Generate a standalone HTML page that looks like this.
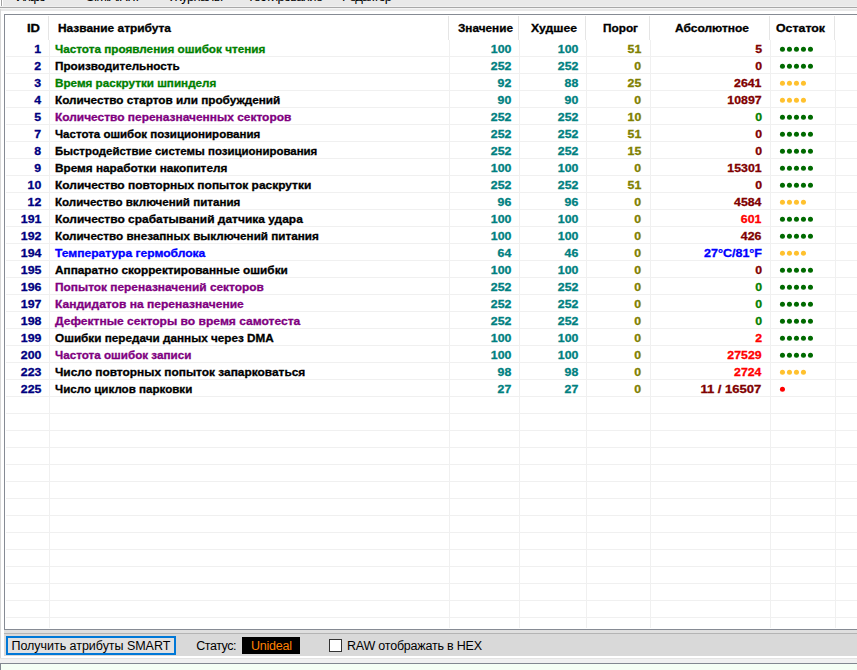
<!DOCTYPE html>
<html lang="ru"><head><meta charset="utf-8"><title>S.M.A.R.T.</title>
<style>
html,body{margin:0;padding:0}
body{width:857px;height:670px;overflow:hidden;position:relative;background:#fff;font-family:"Liberation Sans", sans-serif;}
.a{position:absolute}
.t{position:absolute;white-space:nowrap;font-weight:bold;font-size:11px;line-height:17px;height:17px;-webkit-text-stroke:0.3px}
.r{text-align:right}
.ui{position:absolute;white-space:nowrap;font-size:12.5px;line-height:17px;color:#000}
.hl{position:absolute;left:6px;right:0;height:1px;background:#f0f0f0}
.vl{position:absolute;top:40px;width:1px;height:588px;background:#f0f0f0}
.hs{position:absolute;top:16px;width:1px;height:24px;background:#e5e5e5}
</style></head><body>
<div class="a" style="left:0;top:0;width:857px;height:7px;background:#e9e9e9"></div>
<div class="a" style="left:0;top:0;width:3px;height:7px;background:#fff"></div>
<div class="a" style="left:1px;top:0;width:1px;height:6px;background:#a0a0a0"></div>
<div class="a" style="left:0;top:6px;width:857px;height:1px;background:#f0f0f0"></div>
<div class="a" style="left:0;top:7px;width:857px;height:1px;background:#a8a8a8"></div>
<div class="a" style="left:0;top:8px;width:857px;height:1px;background:#f4f4f4"></div>
<div class="a" style="left:0;top:9px;width:857px;height:2px;background:#e9e9e9"></div>
<div class="a" style="left:0;top:9px;width:1px;height:649px;background:#d8d8d8"></div>
<div class="ui" style="left:16px;top:-12px;font-size:13px;letter-spacing:-1.484px">Инфо</div>
<div class="ui" style="left:86px;top:-12px;font-size:13px;letter-spacing:-1.014px">S.M.A.R.T.</div>
<div class="ui" style="left:170px;top:-12px;font-size:13px;letter-spacing:-0.630px">Журналы</div>
<div class="ui" style="left:247px;top:-12px;font-size:13px;letter-spacing:-0.753px">Тестирование</div>
<div class="ui" style="left:342px;top:-12px;font-size:13px;letter-spacing:-0.853px">Редактор</div>
<div class="a" style="left:4px;top:14px;width:900px;height:614px;border:1px solid #868b94;background:#fff"></div>
<div class="hs" style="left:48px"></div>
<div class="hs" style="left:448px"></div>
<div class="hs" style="left:518px"></div>
<div class="hs" style="left:585px"></div>
<div class="hs" style="left:649px"></div>
<div class="hs" style="left:769px"></div>
<div class="hs" style="left:834px"></div>
<div class="vl" style="left:49px"></div>
<div class="vl" style="left:449px"></div>
<div class="vl" style="left:519px"></div>
<div class="vl" style="left:586px"></div>
<div class="vl" style="left:650px"></div>
<div class="vl" style="left:770px"></div>
<div class="vl" style="left:835px"></div>
<div class="hl" style="top:56px"></div>
<div class="hl" style="top:73px"></div>
<div class="hl" style="top:90px"></div>
<div class="hl" style="top:107px"></div>
<div class="hl" style="top:124px"></div>
<div class="hl" style="top:141px"></div>
<div class="hl" style="top:158px"></div>
<div class="hl" style="top:175px"></div>
<div class="hl" style="top:192px"></div>
<div class="hl" style="top:209px"></div>
<div class="hl" style="top:226px"></div>
<div class="hl" style="top:243px"></div>
<div class="hl" style="top:260px"></div>
<div class="hl" style="top:277px"></div>
<div class="hl" style="top:294px"></div>
<div class="hl" style="top:311px"></div>
<div class="hl" style="top:328px"></div>
<div class="hl" style="top:345px"></div>
<div class="hl" style="top:362px"></div>
<div class="hl" style="top:379px"></div>
<div class="hl" style="top:396px"></div>
<div class="hl" style="top:413px"></div>
<div class="hl" style="top:430px"></div>
<div class="hl" style="top:447px"></div>
<div class="hl" style="top:464px"></div>
<div class="hl" style="top:481px"></div>
<div class="hl" style="top:498px"></div>
<div class="hl" style="top:515px"></div>
<div class="hl" style="top:532px"></div>
<div class="hl" style="top:549px"></div>
<div class="hl" style="top:566px"></div>
<div class="hl" style="top:583px"></div>
<div class="hl" style="top:600px"></div>
<div class="hl" style="top:617px"></div>
<div class="t" style="left:27px;top:20px;color:#000;transform:scaleX(1.1818);transform-origin:0 50%">ID</div>
<div class="t" style="left:58px;top:20px;color:#000;transform:scaleX(1.0826);transform-origin:0 50%">Название атрибута</div>
<div class="t" style="left:458px;top:20px;color:#000;transform:scaleX(1.0696);transform-origin:0 50%">Значение</div>
<div class="t" style="left:531px;top:20px;color:#000;transform:scaleX(1.1105);transform-origin:0 50%">Худшее</div>
<div class="t" style="left:603px;top:20px;color:#000;transform:scaleX(1.0718);transform-origin:0 50%">Порог</div>
<div class="t" style="left:675px;top:20px;color:#000;transform:scaleX(1.0882);transform-origin:0 50%">Абсолютное</div>
<div class="t" style="left:776px;top:20px;color:#000;transform:scaleX(1.1224);transform-origin:0 50%">Остаток</div>
<div class="t r" style="right:816.10px;top:41px;color:#000080;transform:scaleX(1.1184);transform-origin:100% 50%">1</div>
<div class="t" style="left:54.7px;top:41px;color:#008000;transform:scaleX(1.0650);transform-origin:0 50%">Частота проявления ошибок чтения</div>
<div class="t r" style="right:346.00px;top:41px;color:#008080;transform:scaleX(1.1193);transform-origin:100% 50%">100</div>
<div class="t r" style="right:279.00px;top:41px;color:#008080;transform:scaleX(1.1193);transform-origin:100% 50%">100</div>
<div class="t r" style="right:215.80px;top:41px;color:#808000;transform:scaleX(1.1184);transform-origin:100% 50%">51</div>
<div class="t r" style="right:95.20px;top:41px;color:#800000;transform:scaleX(1.1184);transform-origin:100% 50%">5</div>
<svg class="a" style="left:776px;top:40px" width="50" height="17" fill="#006a00"><circle cx="6.45" cy="9.30" r="2.5"/><circle cx="13.45" cy="9.30" r="2.5"/><circle cx="20.45" cy="9.30" r="2.5"/><circle cx="27.45" cy="9.30" r="2.5"/><circle cx="34.45" cy="9.30" r="2.5"/></svg>
<div class="t r" style="right:816.10px;top:58px;color:#000080;transform:scaleX(1.1184);transform-origin:100% 50%">2</div>
<div class="t" style="left:54.7px;top:58px;color:#000000;transform:scaleX(1.0643);transform-origin:0 50%">Производительность</div>
<div class="t r" style="right:346.00px;top:58px;color:#008080;transform:scaleX(1.1193);transform-origin:100% 50%">252</div>
<div class="t r" style="right:279.00px;top:58px;color:#008080;transform:scaleX(1.1193);transform-origin:100% 50%">252</div>
<div class="t r" style="right:215.80px;top:58px;color:#808000;transform:scaleX(1.1184);transform-origin:100% 50%">0</div>
<div class="t r" style="right:95.20px;top:58px;color:#800000;transform:scaleX(1.1184);transform-origin:100% 50%">0</div>
<svg class="a" style="left:776px;top:57px" width="50" height="17" fill="#006a00"><circle cx="6.45" cy="9.30" r="2.5"/><circle cx="13.45" cy="9.30" r="2.5"/><circle cx="20.45" cy="9.30" r="2.5"/><circle cx="27.45" cy="9.30" r="2.5"/><circle cx="34.45" cy="9.30" r="2.5"/></svg>
<div class="t r" style="right:816.10px;top:75px;color:#000080;transform:scaleX(1.1184);transform-origin:100% 50%">3</div>
<div class="t" style="left:54.7px;top:75px;color:#008000;transform:scaleX(1.0613);transform-origin:0 50%">Время раскрутки шпинделя</div>
<div class="t r" style="right:346.00px;top:75px;color:#008080;transform:scaleX(1.1184);transform-origin:100% 50%">92</div>
<div class="t r" style="right:279.00px;top:75px;color:#008080;transform:scaleX(1.1184);transform-origin:100% 50%">88</div>
<div class="t r" style="right:215.80px;top:75px;color:#808000;transform:scaleX(1.1184);transform-origin:100% 50%">25</div>
<div class="t r" style="right:95.20px;top:75px;color:#800000;transform:scaleX(1.1191);transform-origin:100% 50%">2641</div>
<svg class="a" style="left:776px;top:74px" width="50" height="17" fill="#ffc12e"><circle cx="6.45" cy="9.30" r="2.5"/><circle cx="13.45" cy="9.30" r="2.5"/><circle cx="20.45" cy="9.30" r="2.5"/><circle cx="27.45" cy="9.30" r="2.5"/></svg>
<div class="t r" style="right:816.10px;top:92px;color:#000080;transform:scaleX(1.1184);transform-origin:100% 50%">4</div>
<div class="t" style="left:54.7px;top:92px;color:#000000;transform:scaleX(1.0690);transform-origin:0 50%">Количество стартов или пробуждений</div>
<div class="t r" style="right:346.00px;top:92px;color:#008080;transform:scaleX(1.1184);transform-origin:100% 50%">90</div>
<div class="t r" style="right:279.00px;top:92px;color:#008080;transform:scaleX(1.1184);transform-origin:100% 50%">90</div>
<div class="t r" style="right:215.80px;top:92px;color:#808000;transform:scaleX(1.1184);transform-origin:100% 50%">0</div>
<div class="t r" style="right:95.20px;top:92px;color:#800000;transform:scaleX(1.1195);transform-origin:100% 50%">10897</div>
<svg class="a" style="left:776px;top:91px" width="50" height="17" fill="#ffc12e"><circle cx="6.45" cy="9.30" r="2.5"/><circle cx="13.45" cy="9.30" r="2.5"/><circle cx="20.45" cy="9.30" r="2.5"/><circle cx="27.45" cy="9.30" r="2.5"/></svg>
<div class="t r" style="right:816.10px;top:109px;color:#000080;transform:scaleX(1.1184);transform-origin:100% 50%">5</div>
<div class="t" style="left:54.7px;top:109px;color:#800080;transform:scaleX(1.0845);transform-origin:0 50%">Количество переназначенных секторов</div>
<div class="t r" style="right:346.00px;top:109px;color:#008080;transform:scaleX(1.1193);transform-origin:100% 50%">252</div>
<div class="t r" style="right:279.00px;top:109px;color:#008080;transform:scaleX(1.1193);transform-origin:100% 50%">252</div>
<div class="t r" style="right:215.80px;top:109px;color:#808000;transform:scaleX(1.1184);transform-origin:100% 50%">10</div>
<div class="t r" style="right:95.20px;top:109px;color:#008000;transform:scaleX(1.1184);transform-origin:100% 50%">0</div>
<svg class="a" style="left:776px;top:108px" width="50" height="17" fill="#006a00"><circle cx="6.45" cy="9.30" r="2.5"/><circle cx="13.45" cy="9.30" r="2.5"/><circle cx="20.45" cy="9.30" r="2.5"/><circle cx="27.45" cy="9.30" r="2.5"/><circle cx="34.45" cy="9.30" r="2.5"/></svg>
<div class="t r" style="right:816.10px;top:126px;color:#000080;transform:scaleX(1.1184);transform-origin:100% 50%">7</div>
<div class="t" style="left:54.7px;top:126px;color:#000000;transform:scaleX(1.0472);transform-origin:0 50%">Частота ошибок позиционирования</div>
<div class="t r" style="right:346.00px;top:126px;color:#008080;transform:scaleX(1.1193);transform-origin:100% 50%">252</div>
<div class="t r" style="right:279.00px;top:126px;color:#008080;transform:scaleX(1.1193);transform-origin:100% 50%">252</div>
<div class="t r" style="right:215.80px;top:126px;color:#808000;transform:scaleX(1.1184);transform-origin:100% 50%">51</div>
<div class="t r" style="right:95.20px;top:126px;color:#800000;transform:scaleX(1.1184);transform-origin:100% 50%">0</div>
<svg class="a" style="left:776px;top:125px" width="50" height="17" fill="#006a00"><circle cx="6.45" cy="9.30" r="2.5"/><circle cx="13.45" cy="9.30" r="2.5"/><circle cx="20.45" cy="9.30" r="2.5"/><circle cx="27.45" cy="9.30" r="2.5"/><circle cx="34.45" cy="9.30" r="2.5"/></svg>
<div class="t r" style="right:816.10px;top:143px;color:#000080;transform:scaleX(1.1184);transform-origin:100% 50%">8</div>
<div class="t" style="left:54.7px;top:143px;color:#000000;transform:scaleX(1.0400);transform-origin:0 50%">Быстродействие системы позиционирования</div>
<div class="t r" style="right:346.00px;top:143px;color:#008080;transform:scaleX(1.1193);transform-origin:100% 50%">252</div>
<div class="t r" style="right:279.00px;top:143px;color:#008080;transform:scaleX(1.1193);transform-origin:100% 50%">252</div>
<div class="t r" style="right:215.80px;top:143px;color:#808000;transform:scaleX(1.1184);transform-origin:100% 50%">15</div>
<div class="t r" style="right:95.20px;top:143px;color:#800000;transform:scaleX(1.1184);transform-origin:100% 50%">0</div>
<svg class="a" style="left:776px;top:142px" width="50" height="17" fill="#006a00"><circle cx="6.45" cy="9.30" r="2.5"/><circle cx="13.45" cy="9.30" r="2.5"/><circle cx="20.45" cy="9.30" r="2.5"/><circle cx="27.45" cy="9.30" r="2.5"/><circle cx="34.45" cy="9.30" r="2.5"/></svg>
<div class="t r" style="right:816.10px;top:160px;color:#000080;transform:scaleX(1.1184);transform-origin:100% 50%">9</div>
<div class="t" style="left:54.7px;top:160px;color:#000000;transform:scaleX(1.0704);transform-origin:0 50%">Время наработки накопителя</div>
<div class="t r" style="right:346.00px;top:160px;color:#008080;transform:scaleX(1.1193);transform-origin:100% 50%">100</div>
<div class="t r" style="right:279.00px;top:160px;color:#008080;transform:scaleX(1.1193);transform-origin:100% 50%">100</div>
<div class="t r" style="right:215.80px;top:160px;color:#808000;transform:scaleX(1.1184);transform-origin:100% 50%">0</div>
<div class="t r" style="right:95.20px;top:160px;color:#800000;transform:scaleX(1.1195);transform-origin:100% 50%">15301</div>
<svg class="a" style="left:776px;top:159px" width="50" height="17" fill="#006a00"><circle cx="6.45" cy="9.30" r="2.5"/><circle cx="13.45" cy="9.30" r="2.5"/><circle cx="20.45" cy="9.30" r="2.5"/><circle cx="27.45" cy="9.30" r="2.5"/><circle cx="34.45" cy="9.30" r="2.5"/></svg>
<div class="t r" style="right:816.10px;top:177px;color:#000080;transform:scaleX(1.1184);transform-origin:100% 50%">10</div>
<div class="t" style="left:54.7px;top:177px;color:#000000;transform:scaleX(1.0864);transform-origin:0 50%">Количество повторных попыток раскрутки</div>
<div class="t r" style="right:346.00px;top:177px;color:#008080;transform:scaleX(1.1193);transform-origin:100% 50%">252</div>
<div class="t r" style="right:279.00px;top:177px;color:#008080;transform:scaleX(1.1193);transform-origin:100% 50%">252</div>
<div class="t r" style="right:215.80px;top:177px;color:#808000;transform:scaleX(1.1184);transform-origin:100% 50%">51</div>
<div class="t r" style="right:95.20px;top:177px;color:#800000;transform:scaleX(1.1184);transform-origin:100% 50%">0</div>
<svg class="a" style="left:776px;top:176px" width="50" height="17" fill="#006a00"><circle cx="6.45" cy="9.30" r="2.5"/><circle cx="13.45" cy="9.30" r="2.5"/><circle cx="20.45" cy="9.30" r="2.5"/><circle cx="27.45" cy="9.30" r="2.5"/><circle cx="34.45" cy="9.30" r="2.5"/></svg>
<div class="t r" style="right:816.10px;top:194px;color:#000080;transform:scaleX(1.1184);transform-origin:100% 50%">12</div>
<div class="t" style="left:54.7px;top:194px;color:#000000;transform:scaleX(1.0528);transform-origin:0 50%">Количество включений питания</div>
<div class="t r" style="right:346.00px;top:194px;color:#008080;transform:scaleX(1.1184);transform-origin:100% 50%">96</div>
<div class="t r" style="right:279.00px;top:194px;color:#008080;transform:scaleX(1.1184);transform-origin:100% 50%">96</div>
<div class="t r" style="right:215.80px;top:194px;color:#808000;transform:scaleX(1.1184);transform-origin:100% 50%">0</div>
<div class="t r" style="right:95.20px;top:194px;color:#800000;transform:scaleX(1.1191);transform-origin:100% 50%">4584</div>
<svg class="a" style="left:776px;top:193px" width="50" height="17" fill="#ffc12e"><circle cx="6.45" cy="9.30" r="2.5"/><circle cx="13.45" cy="9.30" r="2.5"/><circle cx="20.45" cy="9.30" r="2.5"/><circle cx="27.45" cy="9.30" r="2.5"/></svg>
<div class="t r" style="right:816.10px;top:211px;color:#000080;transform:scaleX(1.1193);transform-origin:100% 50%">191</div>
<div class="t" style="left:54.7px;top:211px;color:#000000;transform:scaleX(1.0874);transform-origin:0 50%">Количество срабатываний датчика удара</div>
<div class="t r" style="right:346.00px;top:211px;color:#008080;transform:scaleX(1.1193);transform-origin:100% 50%">100</div>
<div class="t r" style="right:279.00px;top:211px;color:#008080;transform:scaleX(1.1193);transform-origin:100% 50%">100</div>
<div class="t r" style="right:215.80px;top:211px;color:#808000;transform:scaleX(1.1184);transform-origin:100% 50%">0</div>
<div class="t r" style="right:95.20px;top:211px;color:#ff0000;transform:scaleX(1.1193);transform-origin:100% 50%">601</div>
<svg class="a" style="left:776px;top:210px" width="50" height="17" fill="#006a00"><circle cx="6.45" cy="9.30" r="2.5"/><circle cx="13.45" cy="9.30" r="2.5"/><circle cx="20.45" cy="9.30" r="2.5"/><circle cx="27.45" cy="9.30" r="2.5"/><circle cx="34.45" cy="9.30" r="2.5"/></svg>
<div class="t r" style="right:816.10px;top:228px;color:#000080;transform:scaleX(1.1193);transform-origin:100% 50%">192</div>
<div class="t" style="left:54.7px;top:228px;color:#000000;transform:scaleX(1.0628);transform-origin:0 50%">Количество внезапных выключений питания</div>
<div class="t r" style="right:346.00px;top:228px;color:#008080;transform:scaleX(1.1193);transform-origin:100% 50%">100</div>
<div class="t r" style="right:279.00px;top:228px;color:#008080;transform:scaleX(1.1193);transform-origin:100% 50%">100</div>
<div class="t r" style="right:215.80px;top:228px;color:#808000;transform:scaleX(1.1184);transform-origin:100% 50%">0</div>
<div class="t r" style="right:95.20px;top:228px;color:#800000;transform:scaleX(1.1193);transform-origin:100% 50%">426</div>
<svg class="a" style="left:776px;top:227px" width="50" height="17" fill="#006a00"><circle cx="6.45" cy="9.30" r="2.5"/><circle cx="13.45" cy="9.30" r="2.5"/><circle cx="20.45" cy="9.30" r="2.5"/><circle cx="27.45" cy="9.30" r="2.5"/><circle cx="34.45" cy="9.30" r="2.5"/></svg>
<div class="t r" style="right:816.10px;top:245px;color:#000080;transform:scaleX(1.1193);transform-origin:100% 50%">194</div>
<div class="t" style="left:54.7px;top:245px;color:#0000ff;transform:scaleX(1.0962);transform-origin:0 50%">Температура гермоблока</div>
<div class="t r" style="right:346.00px;top:245px;color:#008080;transform:scaleX(1.1184);transform-origin:100% 50%">64</div>
<div class="t r" style="right:279.00px;top:245px;color:#008080;transform:scaleX(1.1184);transform-origin:100% 50%">46</div>
<div class="t r" style="right:215.80px;top:245px;color:#808000;transform:scaleX(1.1184);transform-origin:100% 50%">0</div>
<div class="t r" style="right:95.20px;top:245px;color:#0000ff;transform:scaleX(1.1373);transform-origin:100% 50%">27°C/81°F</div>
<svg class="a" style="left:776px;top:244px" width="50" height="17" fill="#ffc12e"><circle cx="6.45" cy="9.30" r="2.5"/><circle cx="13.45" cy="9.30" r="2.5"/><circle cx="20.45" cy="9.30" r="2.5"/><circle cx="27.45" cy="9.30" r="2.5"/></svg>
<div class="t r" style="right:816.10px;top:262px;color:#000080;transform:scaleX(1.1193);transform-origin:100% 50%">195</div>
<div class="t" style="left:54.7px;top:262px;color:#000000;transform:scaleX(1.0720);transform-origin:0 50%">Аппаратно скорректированные ошибки</div>
<div class="t r" style="right:346.00px;top:262px;color:#008080;transform:scaleX(1.1193);transform-origin:100% 50%">100</div>
<div class="t r" style="right:279.00px;top:262px;color:#008080;transform:scaleX(1.1193);transform-origin:100% 50%">100</div>
<div class="t r" style="right:215.80px;top:262px;color:#808000;transform:scaleX(1.1184);transform-origin:100% 50%">0</div>
<div class="t r" style="right:95.20px;top:262px;color:#800000;transform:scaleX(1.1184);transform-origin:100% 50%">0</div>
<svg class="a" style="left:776px;top:261px" width="50" height="17" fill="#006a00"><circle cx="6.45" cy="9.30" r="2.5"/><circle cx="13.45" cy="9.30" r="2.5"/><circle cx="20.45" cy="9.30" r="2.5"/><circle cx="27.45" cy="9.30" r="2.5"/><circle cx="34.45" cy="9.30" r="2.5"/></svg>
<div class="t r" style="right:816.10px;top:279px;color:#000080;transform:scaleX(1.1193);transform-origin:100% 50%">196</div>
<div class="t" style="left:54.7px;top:279px;color:#800080;transform:scaleX(1.0803);transform-origin:0 50%">Попыток переназначений секторов</div>
<div class="t r" style="right:346.00px;top:279px;color:#008080;transform:scaleX(1.1193);transform-origin:100% 50%">252</div>
<div class="t r" style="right:279.00px;top:279px;color:#008080;transform:scaleX(1.1193);transform-origin:100% 50%">252</div>
<div class="t r" style="right:215.80px;top:279px;color:#808000;transform:scaleX(1.1184);transform-origin:100% 50%">0</div>
<div class="t r" style="right:95.20px;top:279px;color:#008000;transform:scaleX(1.1184);transform-origin:100% 50%">0</div>
<svg class="a" style="left:776px;top:278px" width="50" height="17" fill="#006a00"><circle cx="6.45" cy="9.30" r="2.5"/><circle cx="13.45" cy="9.30" r="2.5"/><circle cx="20.45" cy="9.30" r="2.5"/><circle cx="27.45" cy="9.30" r="2.5"/><circle cx="34.45" cy="9.30" r="2.5"/></svg>
<div class="t r" style="right:816.10px;top:296px;color:#000080;transform:scaleX(1.1193);transform-origin:100% 50%">197</div>
<div class="t" style="left:54.7px;top:296px;color:#800080;transform:scaleX(1.0943);transform-origin:0 50%">Кандидатов на переназначение</div>
<div class="t r" style="right:346.00px;top:296px;color:#008080;transform:scaleX(1.1193);transform-origin:100% 50%">252</div>
<div class="t r" style="right:279.00px;top:296px;color:#008080;transform:scaleX(1.1193);transform-origin:100% 50%">252</div>
<div class="t r" style="right:215.80px;top:296px;color:#808000;transform:scaleX(1.1184);transform-origin:100% 50%">0</div>
<div class="t r" style="right:95.20px;top:296px;color:#008000;transform:scaleX(1.1184);transform-origin:100% 50%">0</div>
<svg class="a" style="left:776px;top:295px" width="50" height="17" fill="#006a00"><circle cx="6.45" cy="9.30" r="2.5"/><circle cx="13.45" cy="9.30" r="2.5"/><circle cx="20.45" cy="9.30" r="2.5"/><circle cx="27.45" cy="9.30" r="2.5"/><circle cx="34.45" cy="9.30" r="2.5"/></svg>
<div class="t r" style="right:816.10px;top:313px;color:#000080;transform:scaleX(1.1193);transform-origin:100% 50%">198</div>
<div class="t" style="left:54.7px;top:313px;color:#800080;transform:scaleX(1.0955);transform-origin:0 50%">Дефектные секторы во время самотеста</div>
<div class="t r" style="right:346.00px;top:313px;color:#008080;transform:scaleX(1.1193);transform-origin:100% 50%">252</div>
<div class="t r" style="right:279.00px;top:313px;color:#008080;transform:scaleX(1.1193);transform-origin:100% 50%">252</div>
<div class="t r" style="right:215.80px;top:313px;color:#808000;transform:scaleX(1.1184);transform-origin:100% 50%">0</div>
<div class="t r" style="right:95.20px;top:313px;color:#008000;transform:scaleX(1.1184);transform-origin:100% 50%">0</div>
<svg class="a" style="left:776px;top:312px" width="50" height="17" fill="#006a00"><circle cx="6.45" cy="9.30" r="2.5"/><circle cx="13.45" cy="9.30" r="2.5"/><circle cx="20.45" cy="9.30" r="2.5"/><circle cx="27.45" cy="9.30" r="2.5"/><circle cx="34.45" cy="9.30" r="2.5"/></svg>
<div class="t r" style="right:816.10px;top:330px;color:#000080;transform:scaleX(1.1193);transform-origin:100% 50%">199</div>
<div class="t" style="left:54.7px;top:330px;color:#000000;transform:scaleX(1.0667);transform-origin:0 50%">Ошибки передачи данных через DMA</div>
<div class="t r" style="right:346.00px;top:330px;color:#008080;transform:scaleX(1.1193);transform-origin:100% 50%">100</div>
<div class="t r" style="right:279.00px;top:330px;color:#008080;transform:scaleX(1.1193);transform-origin:100% 50%">100</div>
<div class="t r" style="right:215.80px;top:330px;color:#808000;transform:scaleX(1.1184);transform-origin:100% 50%">0</div>
<div class="t r" style="right:95.20px;top:330px;color:#ff0000;transform:scaleX(1.1184);transform-origin:100% 50%">2</div>
<svg class="a" style="left:776px;top:329px" width="50" height="17" fill="#006a00"><circle cx="6.45" cy="9.30" r="2.5"/><circle cx="13.45" cy="9.30" r="2.5"/><circle cx="20.45" cy="9.30" r="2.5"/><circle cx="27.45" cy="9.30" r="2.5"/><circle cx="34.45" cy="9.30" r="2.5"/></svg>
<div class="t r" style="right:816.10px;top:347px;color:#000080;transform:scaleX(1.1193);transform-origin:100% 50%">200</div>
<div class="t" style="left:54.7px;top:347px;color:#800080;transform:scaleX(1.0593);transform-origin:0 50%">Частота ошибок записи</div>
<div class="t r" style="right:346.00px;top:347px;color:#008080;transform:scaleX(1.1193);transform-origin:100% 50%">100</div>
<div class="t r" style="right:279.00px;top:347px;color:#008080;transform:scaleX(1.1193);transform-origin:100% 50%">100</div>
<div class="t r" style="right:215.80px;top:347px;color:#808000;transform:scaleX(1.1184);transform-origin:100% 50%">0</div>
<div class="t r" style="right:95.20px;top:347px;color:#ff0000;transform:scaleX(1.1195);transform-origin:100% 50%">27529</div>
<svg class="a" style="left:776px;top:346px" width="50" height="17" fill="#006a00"><circle cx="6.45" cy="9.30" r="2.5"/><circle cx="13.45" cy="9.30" r="2.5"/><circle cx="20.45" cy="9.30" r="2.5"/><circle cx="27.45" cy="9.30" r="2.5"/><circle cx="34.45" cy="9.30" r="2.5"/></svg>
<div class="t r" style="right:816.10px;top:364px;color:#000080;transform:scaleX(1.1193);transform-origin:100% 50%">223</div>
<div class="t" style="left:54.7px;top:364px;color:#000000;transform:scaleX(1.0814);transform-origin:0 50%">Число повторных попыток запарковаться</div>
<div class="t r" style="right:346.00px;top:364px;color:#008080;transform:scaleX(1.1184);transform-origin:100% 50%">98</div>
<div class="t r" style="right:279.00px;top:364px;color:#008080;transform:scaleX(1.1184);transform-origin:100% 50%">98</div>
<div class="t r" style="right:215.80px;top:364px;color:#808000;transform:scaleX(1.1184);transform-origin:100% 50%">0</div>
<div class="t r" style="right:95.20px;top:364px;color:#ff0000;transform:scaleX(1.1191);transform-origin:100% 50%">2724</div>
<svg class="a" style="left:776px;top:363px" width="50" height="17" fill="#ffc12e"><circle cx="6.45" cy="9.30" r="2.5"/><circle cx="13.45" cy="9.30" r="2.5"/><circle cx="20.45" cy="9.30" r="2.5"/><circle cx="27.45" cy="9.30" r="2.5"/></svg>
<div class="t r" style="right:816.10px;top:381px;color:#000080;transform:scaleX(1.1193);transform-origin:100% 50%">225</div>
<div class="t" style="left:54.7px;top:381px;color:#000000;transform:scaleX(1.0531);transform-origin:0 50%">Число циклов парковки</div>
<div class="t r" style="right:346.00px;top:381px;color:#008080;transform:scaleX(1.1184);transform-origin:100% 50%">27</div>
<div class="t r" style="right:279.00px;top:381px;color:#008080;transform:scaleX(1.1184);transform-origin:100% 50%">27</div>
<div class="t r" style="right:215.80px;top:381px;color:#808000;transform:scaleX(1.1184);transform-origin:100% 50%">0</div>
<div class="t r" style="right:95.20px;top:381px;color:#800000;transform:scaleX(1.1870);transform-origin:100% 50%">11 / 16507</div>
<svg class="a" style="left:776px;top:380px" width="50" height="17" fill="#ff0000"><circle cx="6.45" cy="9.30" r="2.5"/></svg>
<div class="a" style="left:4px;top:630px;width:853px;height:3px;background:#dfdfdf"></div>
<div class="a" style="left:4px;top:633px;width:853px;height:1px;background:#b4b4b4"></div>
<div class="a" style="left:4px;top:634px;width:853px;height:22px;background:#d9d9d9"></div>
<div class="a" style="left:6px;top:636px;width:166px;height:15px;border:2px solid #0078d7;background:#e1e1e1"></div>
<div class="ui" style="left:11.5px;top:638px;color:#000;letter-spacing:-0.036px;">Получить атрибуты SMART</div>
<div class="ui" style="left:196.3px;top:638px;color:#000;letter-spacing:-0.467px;">Статус:</div>
<div class="a" style="left:242px;top:637px;width:58px;height:17px;background:#000"></div>
<div class="ui" style="left:251px;top:638px;color:#ff8000;letter-spacing:-0.232px;">Unideal</div>
<div class="a" style="left:329px;top:639px;width:11px;height:11px;border:1px solid #333;background:#fff"></div>
<div class="ui" style="left:347px;top:638px;color:#000;letter-spacing:-0.211px;">RAW отображать в HEX</div>
<div class="a" style="left:0;top:658px;width:857px;height:1px;background:#e3e3e3"></div>
<div class="a" style="left:0;top:659px;width:857px;height:4px;background:#f0f0f0"></div>
<div class="a" style="left:0;top:663px;width:857px;height:1px;background:#828790"></div>
<div class="a" style="left:0;top:664px;width:857px;height:6px;background:#f5fff5"></div>
<div class="a" style="left:0;top:664px;width:1px;height:6px;background:#828790"></div>
</body></html>
